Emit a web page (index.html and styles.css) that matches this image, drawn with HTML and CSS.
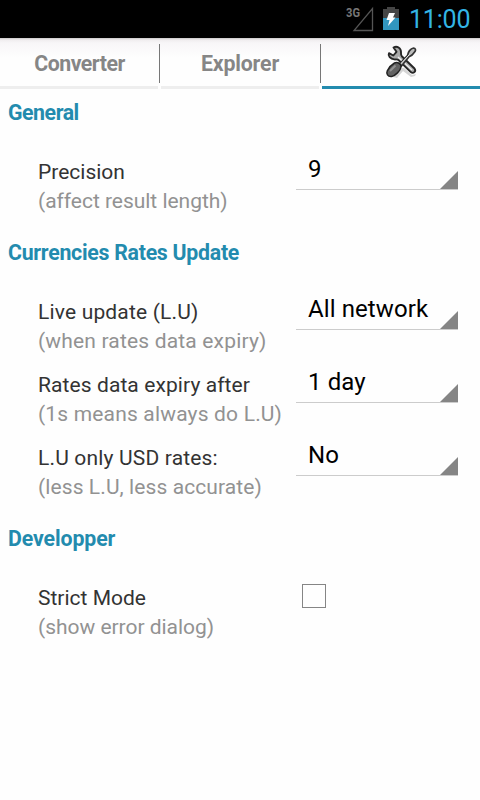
FILE: index.html
```html
<!DOCTYPE html>
<html lang="en">
<head>
<meta charset="utf-8">
<title>Converter settings</title>
<link rel="stylesheet" href="styles.css">
</head>
<body>
<header class="status">
  <svg class="signal" width="30" height="28" viewBox="0 0 30 28"><text x="1" y="12" class="network" textLength="14" lengthAdjust="spacingAndGlyphs">3G</text><path d="M9 25.500H27.500V3.500Z" fill="none" stroke="#555" stroke-width="1.300"/></svg>
  <svg class="battery" width="16" height="24" viewBox="0 0 16 24"><path d="M4 0h8v2H4zM0 2h16v10H0z" fill="#454545"/><path d="M0 11h16v12H0z" fill="#3196bf"/><path d="M6 6h6L10 10.500h2.500L5 19l1.500-6H3.500z" fill="#fff"/></svg>
  <span class="clock">11:00</span>
</header>
<nav class="tabs">
  <div class="tab converter"><span>Converter</span></div>
  <i class="divider"></i>
  <div class="tab"><span>Explorer</span></div>
  <i class="divider"></i>
  <div class="tab active">
    <svg class="tools" width="34" height="36" viewBox="0 0 34 36">
      <path d="M8 33L16 24 19 24 27 31 31 30 30 32 26 33 18 27 12 34Z" fill="#d4d4d4"/>
      <path d="M8.500 3.500C12 1.500 16 4 16 8c0 2-.3 3 .8 4.200L29.500 24.500c2 2.600-1 5.700-3.700 3.600L13.500 16c-1.300-1-2.500-.4-4.200-.6C5.500 15 2.500 12 4 9.200l4.300 2.300 3.200-3.700z" fill="#aaa" stroke="#262626" stroke-width="1.900" stroke-linejoin="round"/>
      <path d="M13 13l14 13" stroke="#eee" stroke-width="1.300"/>
      <path d="M14.500 20L22.500 11.500C23 8 25.500 4.500 28.500 4c2 0 2.500 2 1.500 3.500-1.500 2.300-3.500 4.500-6 5.300L16.500 22z" fill="#bbb" stroke="#333" stroke-width="1.700" stroke-linejoin="round"/>
      <path d="M15.500 20l9-9.500" stroke="#eee"/>
      <path d="M9.500 19c3-1.500 7 .8 6.500 4-.5 3.700-5.800 8.800-9.300 9.400-4 .5-5.700-2.700-4.400-5.600 1.300-2.600 4.400-6.200 7.200-7.800z" fill="#626262" stroke="#222" stroke-width="1.500"/>
      <path d="M5 27l5.500-5.500" stroke="#929292" stroke-width="2"/>
    </svg>
  </div>
</nav>
<main>
  <section>
    <h2 class="general">General</h2>
    <div class="row"><div class="label"><p class="tight">Precision</p><small class="tight">(affect result length)</small></div><div class="spinner">9</div></div>
  </section>
  <section>
    <h2>Currencies Rates Update</h2>
    <div class="row"><div class="label"><p>Live update (L.U)</p><small>(when rates data expiry)</small></div><div class="spinner">All network</div></div>
    <div class="row"><div class="label"><p class="snug">Rates data expiry after</p><small>(1s means always do L.U)</small></div><div class="spinner">1 day</div></div>
    <div class="row"><div class="label"><p>L.U only USD rates:</p><small class="snug">(less L.U, less accurate)</small></div><div class="spinner">No</div></div>
  </section>
  <section>
    <h2 class="developer">Developper</h2>
    <div class="row"><div class="label"><p class="tight">Strict Mode</p><small class="tight">(show error dialog)</small></div><div class="checkbox"></div></div>
  </section>
</main>
</body>
</html>
```
FILE: styles.css
```css
* { box-sizing: border-box; }
body { margin: 0; height: 800px; overflow: hidden; background: #fefefe; font-family: Roboto, sans-serif; }
.status { height: 38px; background: #000; display: flex; align-items: flex-start; justify-content: flex-end; padding: 5px 10px 0 0; }
.network { font: bold 12px Roboto, sans-serif; fill: #777; }
.battery { margin: 2px 10px 0 8px; }
.clock { color: #33b5e5; font-size: 25px; line-height: 29px; width: 61px; letter-spacing: -0.2px; white-space: nowrap; }
.tabs { display: flex; height: 51px; background: linear-gradient(#c9c7c7 0, #f0edef 2px, #f8f6f8 5px, #fefefe 20px); }
.tab { width: 158px; display: flex; align-items: center; justify-content: center; border-bottom: 3px solid #eee; font-size: 21.3px; font-weight: bold; letter-spacing: -0.15px; color: #868686; padding-top: 2px; }
.converter { letter-spacing: -0.5px; padding-left: 1px; }
.active { border-color: #238bae; }
.divider { width: 3px; height: 39px; margin-top: 6px; background: linear-gradient(#777, #777) 1px 0 / 1px 100% no-repeat; }
.tools { margin: -3px 0 0 1px; }
main { padding: 9px 22px 0 8px; }
section { margin-bottom: 23px; }
h2 { margin: 0 0 30px; font-size: 21.3px; line-height: 29px; font-weight: bold; letter-spacing: -0.27px; color: #238bae; }
.general { letter-spacing: -0.45px; }
.developer { letter-spacing: -0.1px; }
.row { display: flex; height: 58px; margin-bottom: 15px; }
.row:last-child { margin-bottom: 0; }
.label { width: 258px; margin-left: 30px; padding-top: 1px; white-space: nowrap; }
.label p, .label small { display: block; margin: 0; font-size: 21px; line-height: 29px; letter-spacing: 0.17px; color: #333; }
.label small { color: #929292; }
.label .tight { letter-spacing: 0; }
.label small.tight { letter-spacing: -0.03px; }
.label .snug { letter-spacing: 0.09px; }
.spinner { position: relative; width: 162px; height: 33px; padding-left: 12px; border-bottom: 1px solid #ccc; font-size: 24px; line-height: 24px; letter-spacing: 0.1px; color: #000; white-space: nowrap; }
.spinner::after { content: ""; position: absolute; right: 0; bottom: 0; width: 18px; height: 18px; background: #858585; clip-path: polygon(100% 0, 100% 100%, 0 100%); }
.checkbox { width: 24px; height: 24px; margin: 1px 0 0 6px; border: 1px solid #858585; }
```
